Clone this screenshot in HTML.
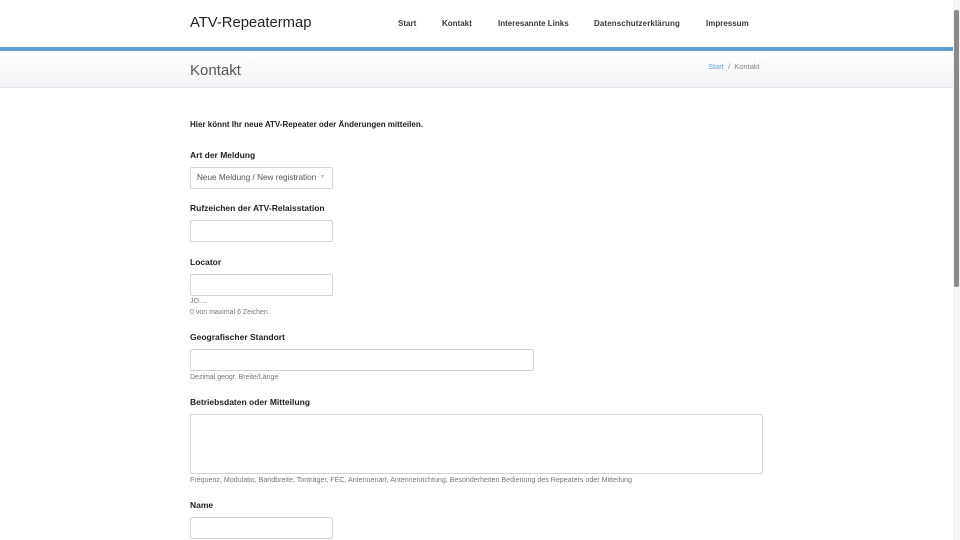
<!DOCTYPE html>
<html><head><meta charset="utf-8"><style>
*{margin:0;padding:0;box-sizing:border-box}
body{width:960px;height:540px;overflow:hidden;background:#fff;font-family:"Liberation Sans",sans-serif;position:relative;color:#222}
.a{position:absolute;white-space:nowrap}
.nav{top:19px;font-size:8px;color:#3a3a3a;font-weight:bold}
.lbl{font-size:8.5px;font-weight:bold;color:#222}
.in{position:absolute;border:1px solid #d2d2d2;border-radius:2px;background:#fff}
.help{font-size:7px;color:#777}
</style></head><body>
<div class="a" style="left:190px;top:15px;font-size:14.8px;color:#222">ATV-Repeatermap</div>
<div class="a nav" style="left:398px">Start</div>
<div class="a nav" style="left:442px">Kontakt</div>
<div class="a nav" style="left:498px">Interesannte Links</div>
<div class="a nav" style="left:594px;letter-spacing:.1px">Datenschutzerklärung</div>
<div class="a nav" style="left:706px">Impressum</div>
<div class="a" style="left:0;top:47px;width:953px;height:4px;background:#5d9fd3"></div>
<div class="a" style="left:0;top:51px;width:953px;height:37px;background:linear-gradient(#fff,#f1f3f6);border-bottom:1px solid #e3e6ea"></div>
<div class="a" style="left:190px;top:62px;font-size:15px;color:#555">Kontakt</div>
<div class="a" style="left:708px;top:62px;font-size:7.5px;color:#888"><span style="color:#5d9fd3">Start</span> &nbsp;/&nbsp; Kontakt</div>
<div class="a lbl" style="left:190px;top:120px;font-size:8px">Hier könnt Ihr neue ATV-Repeater oder Änderungen mitteilen.</div>
<div class="a lbl" style="left:190px;top:150px">Art der Meldung</div>
<div class="in" style="left:190px;top:167px;width:143px;height:22px"></div>
<div class="a" style="left:197px;top:173px;font-size:8.2px;color:#555">Neue Meldung / New registration</div>
<div class="a" style="left:320px;top:174px;font-size:5px;color:#bbb">▼</div>
<div class="a lbl" style="left:190px;top:203px">Rufzeichen der ATV-Relaisstation</div>
<div class="in" style="left:190px;top:220px;width:143px;height:22px"></div>
<div class="a lbl" style="left:190px;top:257px">Locator</div>
<div class="in" style="left:190px;top:274px;width:143px;height:22px"></div>
<div class="a help" style="left:190px;top:298px">JO....</div>
<div class="a help" style="left:190px;top:309px">0 von maximal 6 Zeichen.</div>
<div class="a lbl" style="left:190px;top:332px">Geografischer Standort</div>
<div class="in" style="left:190px;top:349px;width:344px;height:22px"></div>
<div class="a help" style="left:190px;top:374px">Dezimal geogr. Breite/Länge</div>
<div class="a lbl" style="left:190px;top:397px">Betriebsdaten oder Mitteilung</div>
<div class="in" style="left:190px;top:414px;width:573px;height:60px"></div>
<div class="a help" style="left:190px;top:476px;font-size:7.1px">Frequenz, Modulatio, Bandbreite, Tonträger, FEC, Antennenart, Antennenrichtung, Besonderheiten Bedienung des Repeaters oder Mitteilung</div>
<div class="a lbl" style="left:190px;top:500px">Name</div>
<div class="in" style="left:190px;top:517px;width:143px;height:22px"></div>
<div class="a" style="left:953px;top:0;width:7px;height:540px;background:#f4f4f4"></div>
<div class="a" style="left:954px;top:10px;width:5px;height:277px;background:#8a8a8a;border-radius:2px"></div>
</body></html>
